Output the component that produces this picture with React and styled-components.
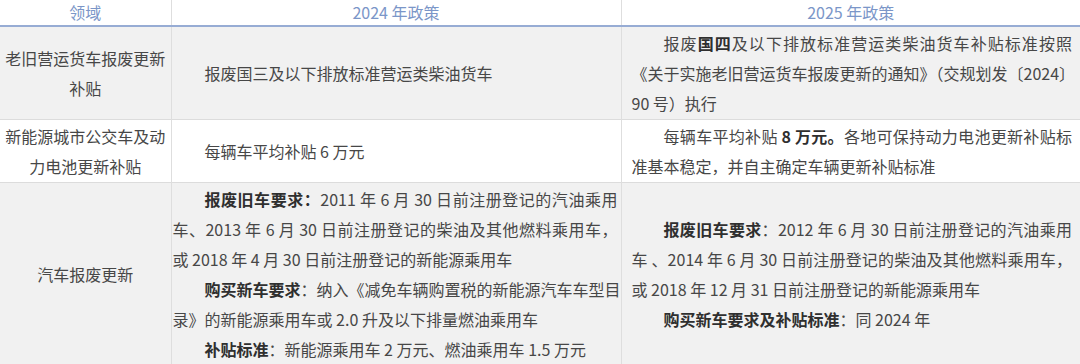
import React from "react";
import styled, { createGlobalStyle } from "styled-components";

const Global = createGlobalStyle`
  html, body { margin: 0; padding: 0; background: #ffffff; }
  body {
    font-family: "Noto Sans CJK SC", "Noto Sans", sans-serif;
    -webkit-font-smoothing: antialiased;
  }
`;

const Table = styled.table`
  width: 1080px;
  table-layout: fixed;
  border-collapse: collapse;
  font-size: 16px;
  color: #474747;
`;

const HeadCell = styled.th`
  height: 25px;
  padding: 0;
  font-weight: 400;
  font-size: 16px;
  line-height: 25px;
  color: #7b96c8;
  text-align: center;
  background: #ffffff;
  border-bottom: 2px solid #97acd4;
  border-right: 1px solid #dedede;
  &:last-child { border-right: none; }
`;

const Row = styled.tr`
  background: ${(p) => (p.$shade ? "#f1f1f1" : "#ffffff")};
  border-bottom: 1px solid #dcdcdc;
`;

const Cell = styled.td`
  padding: ${(p) => (p.$pad === "field" ? "1px 4px" : p.$pad === "y24" ? "1px 3px 1px 1px" : "1px 8px 1px 10px")};
  vertical-align: middle;
  text-align: ${(p) => (p.$center ? "center" : "left")};
  line-height: 30px;
  border-right: 1px solid #dedede;
  &:last-child { border-right: none; }
`;

const Line = styled.span`
  display: block;
  white-space: ${(p) => (p.$justify ? "normal" : "nowrap")};
  text-indent: ${(p) => (p.$indent ? "2em" : "0")};
  text-align: ${(p) => (p.$center ? "center" : p.$justify ? "justify" : "left")};
  text-align-last: ${(p) => (p.$center ? "center" : p.$justify ? "justify" : "left")};
`;

const B = styled.b`
  font-weight: 700;
  color: #2f2f2f;
`;

export default function App() {
  return (
    <>
      <Global />
      <Table>
        <colgroup>
          <col style={{ width: 171 }} />
          <col style={{ width: 450 }} />
          <col style={{ width: 459 }} />
        </colgroup>
        <thead>
          <tr>
            <HeadCell>领域</HeadCell>
            <HeadCell>2024 年政策</HeadCell>
            <HeadCell>2025 年政策</HeadCell>
          </tr>
        </thead>
        <tbody>
          <Row $shade>
            <Cell $pad="field" $center>
              <Line $center>老旧营运货车报废更新</Line>
              <Line $center>补贴</Line>
            </Cell>
            <Cell $pad="y24">
              <Line $indent>报废国三及以下排放标准营运类柴油货车</Line>
            </Cell>
            <Cell>
              <Line $indent $justify>
                报废<B>国四</B>及以下排放标准营运类柴油货车补贴标准按照
              </Line>
              <Line $justify>《关于实施老旧营运货车报废更新的通知》（交规划发〔2024〕</Line>
              <Line>90 号）执行</Line>
            </Cell>
          </Row>
          <Row>
            <Cell $pad="field" $center>
              <Line $center>新能源城市公交车及动</Line>
              <Line $center>力电池更新补贴</Line>
            </Cell>
            <Cell $pad="y24">
              <Line $indent>每辆车平均补贴 6 万元</Line>
            </Cell>
            <Cell>
              <Line $indent $justify>
                每辆车平均补贴 <B>8 万元。</B>各地可保持动力电池更新补贴标
              </Line>
              <Line>准基本稳定，并自主确定车辆更新补贴标准</Line>
            </Cell>
          </Row>
          <Row $shade>
            <Cell $pad="field" $center>
              <Line $center>汽车报废更新</Line>
            </Cell>
            <Cell $pad="y24">
              <Line $indent $justify>
                <B>报废旧车要求：</B>2011 年 6 月 30 日前注册登记的汽油乘用
              </Line>
              <Line $justify>车、2013 年 6 月 30 日前注册登记的柴油及其他燃料乘用车，</Line>
              <Line>或 2018 年 4 月 30 日前注册登记的新能源乘用车</Line>
              <Line $indent>
                <B>购买新车要求</B>：纳入《减免车辆购置税的新能源汽车车型目
              </Line>
              <Line>录》的新能源乘用车或 2.0 升及以下排量燃油乘用车</Line>
              <Line $indent>
                <B>补贴标准</B>：新能源乘用车 2 万元、燃油乘用车 1.5 万元
              </Line>
            </Cell>
            <Cell>
              <Line $indent $justify>
                <B>报废旧车要求</B>：2012 年 6 月 30 日前注册登记的汽油乘用
              </Line>
              <Line $justify>车 、2014 年 6 月 30 日前注册登记的柴油及其他燃料乘用车，</Line>
              <Line>或 2018 年 12 月 31 日前注册登记的新能源乘用车</Line>
              <Line $indent>
                <B>购买新车要求及补贴标准</B>：同 2024 年
              </Line>
            </Cell>
          </Row>
        </tbody>
      </Table>
    </>
  );
}
